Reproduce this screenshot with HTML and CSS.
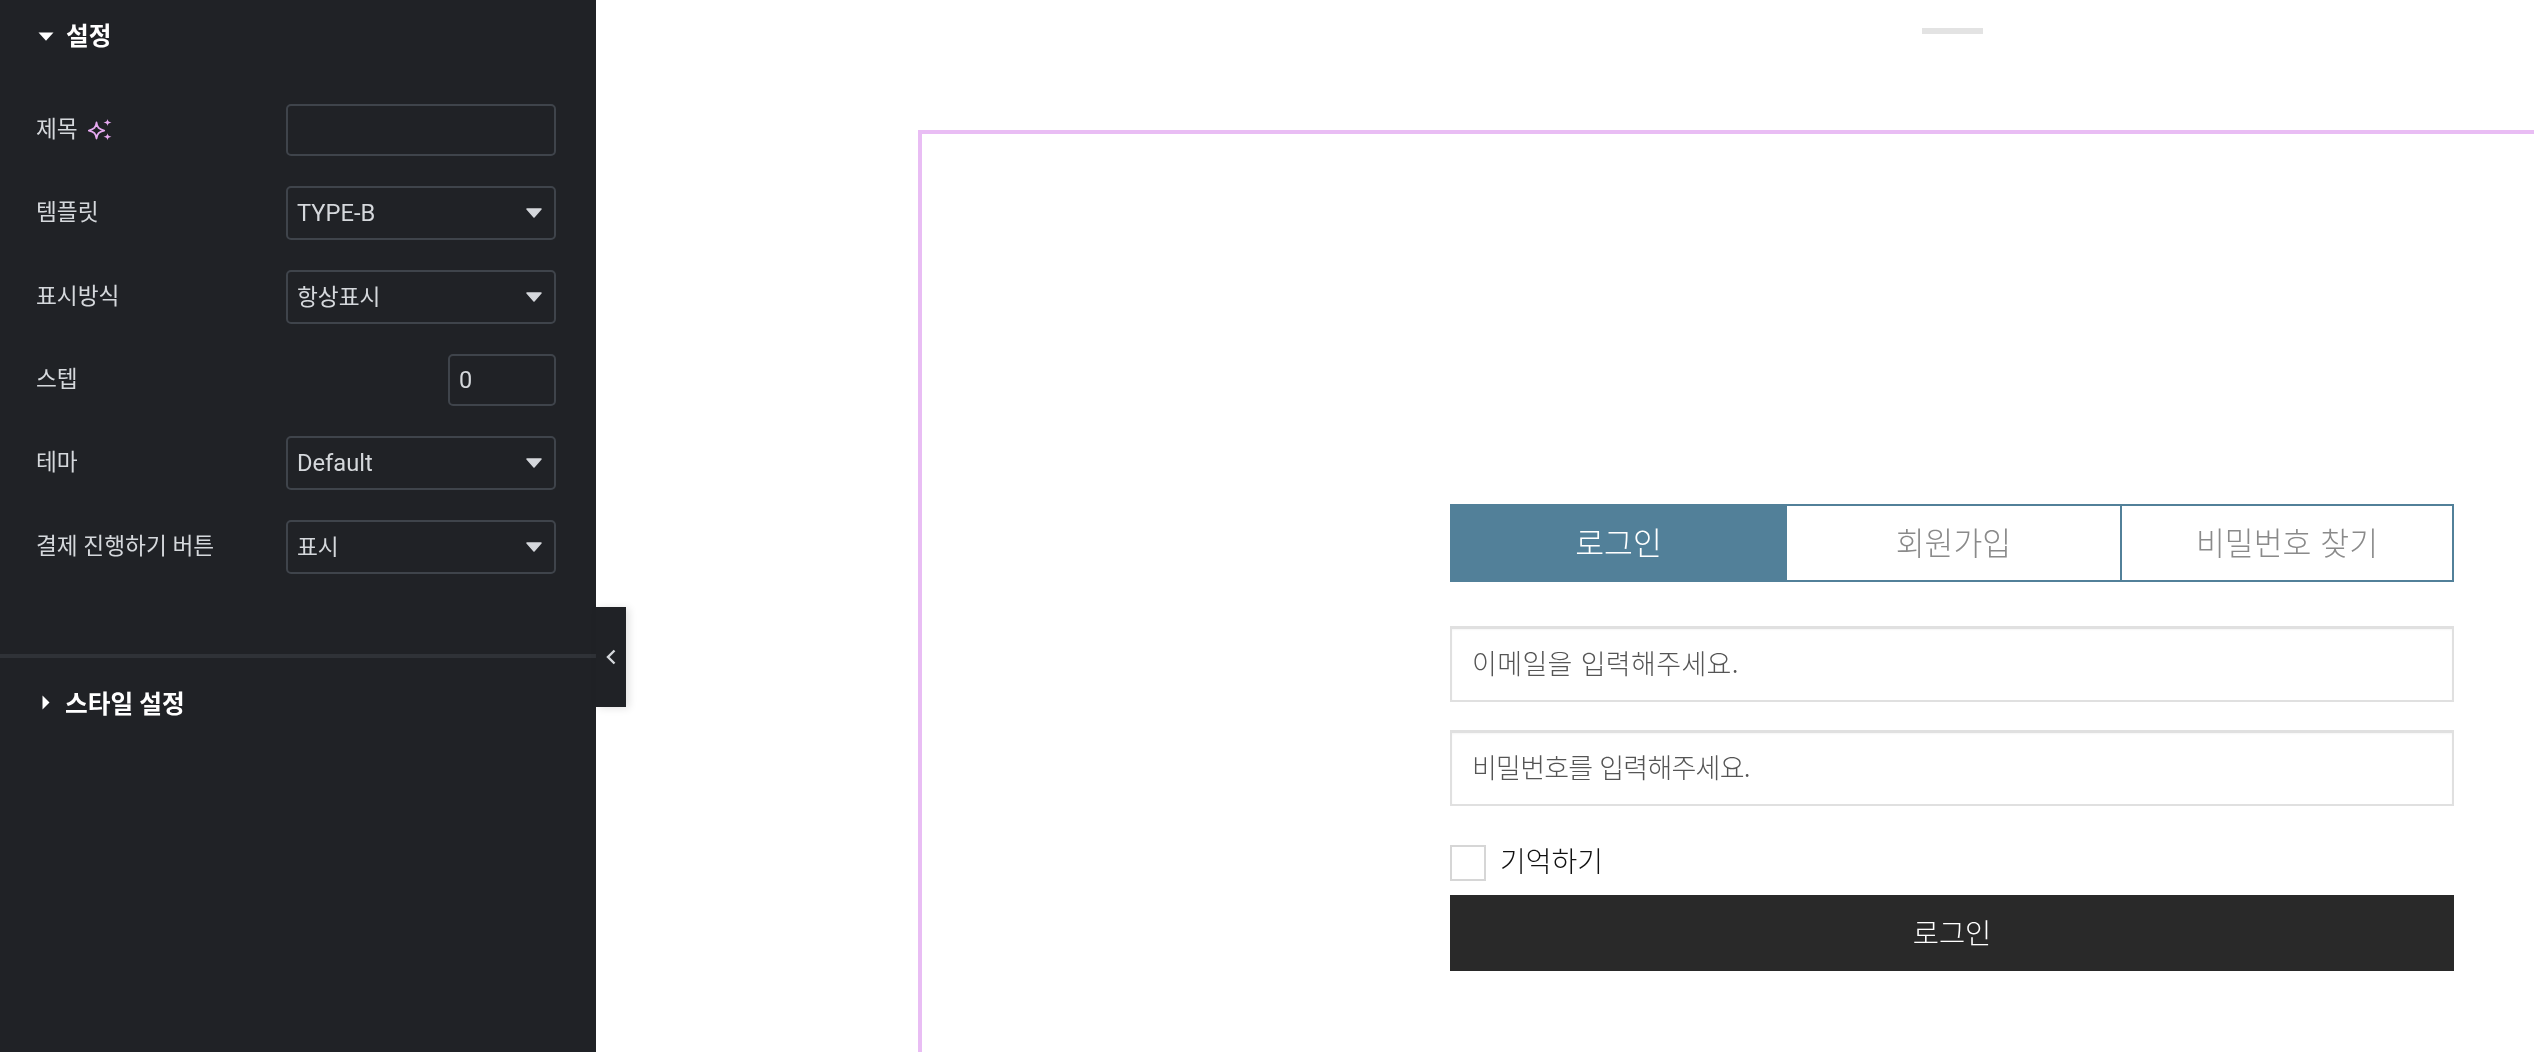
FILE: index.html
```html
<!DOCTYPE html>
<html lang="ko">
<head>
<meta charset="utf-8">
<title>설정</title>
<link rel="stylesheet" href="styles.css">
</head>
<body>
<aside class="panel">
  <section class="settings">
    <h2 class="section-title">
      <svg class="caret-down-white" viewBox="0 0 16 9"><path d="M0.500 0.500H15.500L8 8.800Z"/></svg>
      <span>설정</span>
    </h2>
    <div class="rows">
      <div class="row row-input">
        <span class="label">제목
          <svg class="sparkle" viewBox="0 0 24 22"><path class="sparkle-big" d="M8.500 3.500C9.200 8.600 10.800 10.200 16.200 11.500C10.800 12.800 9.200 14.400 8.500 19.500C7.800 14.400 6.200 12.800 0.800 11.500C6.200 10.200 7.800 8.600 8.500 3.500Z"/><path class="sparkle-small" d="M19.500 0C20 2.300 20.700 3 23.500 3.500C20.700 4 20 4.700 19.500 7C19 4.700 18.300 4 15.500 3.500C18.300 3 19 2.300 19.500 0ZM19.500 14.300C20 16.600 20.700 17.300 23.500 17.800C20.700 18.300 20 19 19.500 21.300C19 19 18.300 18.300 15.500 17.800C18.300 17.300 19 16.600 19.500 14.300Z"/></svg>
        </span>
        <input class="field" type="text" aria-label="제목">
      </div>
      <div class="row">
        <span class="label">템플릿</span>
        <div class="field select"><span class="latin">TYPE-B</span><svg class="caret" viewBox="0 0 16 10"><path d="M1 1H15L8 9Z"/></svg></div>
      </div>
      <div class="row">
        <span class="label">표시방식</span>
        <div class="field select"><span class="hangul">항상표시</span><svg class="caret" viewBox="0 0 16 10"><path d="M1 1H15L8 9Z"/></svg></div>
      </div>
      <div class="row row-input">
        <span class="label">스텝</span>
        <input class="field field-number" type="text" value="0" aria-label="스텝">
      </div>
      <div class="row">
        <span class="label">테마</span>
        <div class="field select"><span class="latin">Default</span><svg class="caret" viewBox="0 0 16 10"><path d="M1 1H15L8 9Z"/></svg></div>
      </div>
      <div class="row">
        <span class="label">결제 진행하기 버튼</span>
        <div class="field select"><span class="hangul">표시</span><svg class="caret" viewBox="0 0 16 10"><path d="M1 1H15L8 9Z"/></svg></div>
      </div>
    </div>
  </section>
  <section class="style-section">
    <h2 class="section-title">
      <svg class="caret-right-white" viewBox="0 0 8 15"><path d="M0.500 0.500L7.500 7.500L0.500 14.500Z"/></svg>
      <span>스타일 설정</span>
    </h2>
  </section>
  <button class="collapse" aria-label="패널 접기">
    <svg viewBox="0 0 10 16"><path d="M8.500 1.500L2 8L8.500 14.500"/></svg>
  </button>
</aside>
<main class="stage">
  <div class="canvas">
    <div class="drag-bar"></div>
    <div class="frame">
      <form class="login">
        <div class="tabs">
          <div class="tab tab-active"><span class="lift">로그인</span></div>
          <div class="tab tab-mid"><span class="lift">회원가입</span></div>
          <div class="tab tab-last"><span class="lift">비밀번호 찾기</span></div>
        </div>
        <input class="text-input text-input-first" type="text" placeholder="이메일을 입력해주세요.">
        <input class="text-input text-input-second" type="text" placeholder="비밀번호를 입력해주세요.">
        <label class="remember"><span class="check"></span><span class="lift-more">기억하기</span></label>
        <button class="submit" type="button"><span class="lift">로그인</span></button>
      </form>
    </div>
  </div>
</main>
</body>
</html>
```
FILE: styles.css
```css
* { box-sizing: border-box; }
html, body { margin: 0; height: 100%; }
body {
  display: flex;
  width: 2534px;
  height: 1052px;
  overflow: hidden;
  background: #fff;
  font-family: Roboto, "Noto Sans CJK KR", sans-serif;
}
.panel {
  position: relative;
  flex: 0 0 596px;
  height: 1052px;
  background: #202226;
  color: #d5d8dc;
  z-index: 1;
}
.settings {
  height: 654px;
  padding: 0 40px 0 36px;
  will-change: transform;
}
.section-title {
  display: flex;
  align-items: center;
  margin: 0;
  height: 68px;
  color: #fff;
  font-size: 24.7px;
  font-weight: 700;
}
.caret-down-white { width: 16px; height: 9px; margin: 4px 12px 0 2px; fill: #fff; }
.caret-right-white { width: 8px; height: 15px; margin: 0 15px 0 6px; fill: #fff; }
.rows { display: flex; flex-direction: column; margin-top: 36px; gap: 30px; }
.row {
  display: flex;
  align-items: center;
  justify-content: space-between;
  height: 54px;
}
.row-input { height: 52px; }
.label {
  display: flex;
  align-items: center;
  font-size: 22.7px;
  line-height: 30px;
}
.sparkle { width: 24px; height: 22px; margin-left: 10px; }
.sparkle-big { fill: none; stroke: #e6a9f0; stroke-width: 1.8; stroke-linejoin: round; }
.sparkle-small { fill: #e6a9f0; }
.field {
  flex: 0 0 270px;
  width: 270px;
  height: 100%;
  padding: 0 9px;
  background: transparent;
  border: 2px solid #3f444b;
  border-radius: 5px;
  color: #d5d8dc;
  font: 400 23.5px Roboto, "Noto Sans CJK KR", sans-serif;
  outline: none;
}
.field-number { flex: 0 0 108px; width: 108px; }
.select {
  display: flex;
  align-items: center;
  justify-content: space-between;
  padding-right: 12px;
}
.latin { font-size: 23.7px; }
.hangul { font-size: 22.7px; position: relative; top: -2px; }
.caret {
  width: 16px;
  height: 10px;
  fill: #d5d8dc;
  stroke: #d5d8dc;
  stroke-width: 1.5;
  stroke-linejoin: round;
}
.style-section {
  height: 398px;
  border-top: 4px solid #2f3237;
  padding: 0 36px;
}
.style-section .section-title { height: 88px; will-change: transform; }
.collapse {
  position: absolute;
  top: 607px;
  left: 596px;
  display: flex;
  align-items: center;
  justify-content: center;
  width: 30px;
  height: 100px;
  padding: 0;
  border: 0;
  background: #202226;
  box-shadow: 3px 1px 8px rgba(0, 0, 0, 0.12);
}
.collapse svg {
  width: 10px;
  height: 16px;
  margin-left: -1px;
  fill: none;
  stroke: #d5d8dc;
  stroke-width: 2.4;
}
.stage {
  flex: 1;
  min-width: 0;
  height: 1052px;
  overflow: hidden;
  will-change: transform;
}
.canvas {
  display: flex;
  flex-direction: column;
  align-items: center;
  width: 2068px;
  margin-left: 322px;
}
.drag-bar {
  flex: none;
  width: 61px;
  height: 6px;
  margin-top: 28px;
  background: #e3e3e3;
}
.frame {
  width: 100%;
  height: 960px;
  margin-top: 96px;
  padding: 370px 528px 0;
  border: 4px solid #e9bdf4;
}
.login { display: flex; flex-direction: column; width: 1004px; }
.lift { position: relative; top: -2px; }
.lift-more { position: relative; top: -3px; }
.tabs { display: flex; height: 78px; }
.tab {
  display: flex;
  align-items: center;
  justify-content: center;
  border: 2px solid #528099;
  color: #8a8a8a;
  font-family: "Noto Sans CJK KR", sans-serif;
  font-size: 31.4px;
  font-weight: 300;
}
.tab-active { width: 337px; background: #528099; color: #fff; }
.tab-mid { width: 333px; border-left: 0; border-right: 0; }
.tab-last { width: 334px; }
.text-input {
  width: 100%;
  height: 76px;
  margin-top: 44px;
  padding: 0 20px 4px;
  border: 2px solid #e0e0e0;
  border-top-width: 3px;
  background: transparent;
  box-shadow: inset 0 1px 2px rgba(0, 0, 0, 0.04);
  font-family: "Noto Sans CJK KR", sans-serif;
  font-size: 27px;
  font-weight: 300;
  outline: none;
}
.text-input::placeholder { color: #555; opacity: 1; }
.text-input-first { letter-spacing: 0.35px; }
.text-input-second { margin-top: 28px; letter-spacing: -0.75px; }
.remember {
  display: flex;
  align-items: center;
  height: 36px;
  margin-top: 39px;
  color: #111;
  font-family: "Noto Sans CJK KR", sans-serif;
  font-size: 28px;
  font-weight: 300;
}
.check {
  width: 36px;
  height: 36px;
  margin-right: 14px;
  border: 2px solid #d6d6d6;
  background: #fff;
}
.submit {
  height: 76px;
  margin-top: 14px;
  padding: 0;
  border: 0;
  background: #292929;
  color: #fff;
  font-family: "Noto Sans CJK KR", sans-serif;
  font-size: 28.5px;
  font-weight: 300;
}
```
